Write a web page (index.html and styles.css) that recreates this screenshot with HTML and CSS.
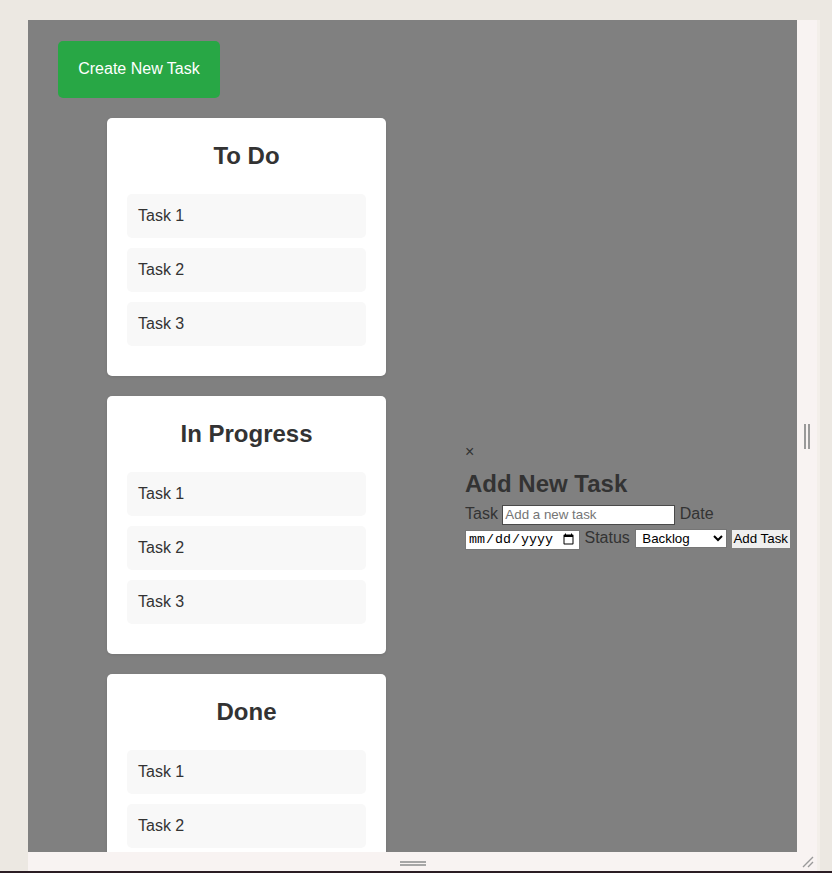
FILE: index.html
```html
<!DOCTYPE html>
<html lang="en">
<head>
<meta charset="utf-8">
<title>Task Board</title>
<link rel="stylesheet" href="styles.css">
</head>
<body>
<div class="frame">
  <div class="viewport">
    <div class="page">
      <div class="main">
        <button class="create-btn" type="button">Create New Task</button>
        <div class="board">
          <section class="column">
            <h2 class="column-title">To Do</h2>
            <div class="task">Task 1</div>
            <div class="task">Task 2</div>
            <div class="task">Task 3</div>
          </section>
          <section class="column">
            <h2 class="column-title">In Progress</h2>
            <div class="task">Task 1</div>
            <div class="task">Task 2</div>
            <div class="task">Task 3</div>
          </section>
          <section class="column">
            <h2 class="column-title">Done</h2>
            <div class="task">Task 1</div>
            <div class="task">Task 2</div>
            <div class="task">Task 3</div>
          </section>
        </div>
      </div>
      <div class="modal">
        <span class="close">×</span>
        <h2 class="modal-title">Add New Task</h2>
        <form class="task-form">
          <label for="task">Task</label> <input class="f-text" id="task" type="text" placeholder="Add a new task"> <label for="date">Date</label> <input class="f-date" id="date" type="date"> <label for="status">Status</label> <select class="f-select" id="status"><option>Backlog</option><option>In Progress</option><option>Done</option></select> <button class="f-btn" type="button">Add Task</button>
        </form>
      </div>
    </div>
  </div>
  <div class="vbar"><span class="vgrip"></span></div>
  <div class="hbar"><span class="hgrip"></span></div>
  <div class="corner">
    <svg width="12" height="12" viewBox="0 0 12 12"><path d="M1 11L11 1M6 11L11 6" stroke="#9a9a9a" stroke-width="1.4" fill="none"/></svg>
  </div>
</div>
<div class="bottom-line"></div>
</body>
</html>
```
FILE: styles.css
```css
html, body {
  margin: 0;
  padding: 0;
}
body {
  width: 832px;
  height: 873px;
  overflow: hidden;
  background: #ece8e2;
  padding-top: 20px;
  box-sizing: border-box;
  font-family: "Liberation Sans", Arial, sans-serif;
  color: #333;
  position: relative;
}
.frame {
  margin-left: 28px;
  width: 789px;
  height: 851px;
  display: grid;
  grid-template-columns: 769px 20px;
  grid-template-rows: 832px 19px;
  background: #f8f3f2;
  box-shadow: 3px 0 0 #f3efea;
}
.viewport {
  background: #808080;
  overflow: hidden;
  position: relative;
}
.page {
  display: flex;
  align-items: center;
}
.main {
  flex: none;
  width: 377px;
  padding: 21px 0 41px 30px;
}
.create-btn {
  display: block;
  width: 162px;
  height: 57px;
  margin: 0 0 20px;
  padding: 0 0 2px;
  border: 0;
  border-radius: 5px;
  background: #28a745;
  color: #fff;
  font-family: "Liberation Sans", Arial, sans-serif;
  font-size: 16px;
  cursor: pointer;
}
.board {
  display: flex;
  flex-direction: column;
  align-items: center;
  gap: 20px;
}
.column {
  width: 279px;
  box-sizing: border-box;
  padding: 20px;
  background: #fff;
  border-radius: 5px;
  box-shadow: 0 1px 3px rgba(0, 0, 0, 0.1);
}
.column-title {
  margin: 4px 0 24px;
  font-size: 24px;
  line-height: 28px;
  text-align: center;
  color: #333;
}
.task {
  background: #f8f8f8;
  border-radius: 5px;
  padding: 12px 11px;
  font-size: 16px;
  line-height: 20px;
  margin-bottom: 10px;
  color: #333;
}
.modal {
  flex: none;
  width: 332px;
  margin-left: 30px;
}
.close {
  display: block;
  font-size: 16px;
  line-height: 18px;
  color: #333;
}
.modal-title {
  margin: 9px 0 4px;
  font-size: 24px;
  line-height: 28px;
  color: #333;
}
.task-form {
  margin: 0;
  font-size: 16px;
  line-height: 24px;
  color: #333;
}
.f-text, .f-date, .f-select, .f-btn {
  box-sizing: border-box;
  font-family: "Liberation Sans", Arial, sans-serif;
  font-size: 13.33px;
  margin: 0;
  vertical-align: baseline;
}
.f-text {
  width: 173px;
  height: 20px;
  padding: 1px 2px;
  border: 1px solid #4a4a4a;
  background: #fff;
}
.f-date {
  width: 115px;
  height: 20px;
  padding: 1px 2px;
  border: 1px solid #767676;
  background: #fff;
  font-family: "Liberation Mono", "DejaVu Sans Mono", monospace;
}
.f-select {
  width: 92px;
  height: 19px;
  margin-left: 1px;
  padding: 0 0 0 2px;
  border: 1px solid #767676;
  border-radius: 0;
  background: #fff;
}
.f-btn {
  width: 58px;
  height: 18px;
  padding: 0 1px;
  border: 0;
  background: #efefef;
  color: #000;
}
.vbar {
  display: flex;
  align-items: center;
  justify-content: center;
}
.vgrip {
  width: 6px;
  height: 25px;
  border-left: 2px solid #999;
  border-right: 2px solid #999;
  box-sizing: border-box;
  margin-left: -1px;
}
.hbar {
  display: flex;
  align-items: center;
  justify-content: center;
}
.hgrip {
  width: 26px;
  height: 5px;
  border-top: 2px solid #a6a6a6;
  border-bottom: 2px solid #a6a6a6;
  box-sizing: border-box;
  margin-top: 3px;
}
.corner {
  display: flex;
  align-items: flex-end;
  justify-content: flex-start;
  padding: 0 0 3px 5px;
}
.corner svg {
  display: block;
}
.bottom-line {
  height: 2px;
  background: #2b1d24;
}
```
